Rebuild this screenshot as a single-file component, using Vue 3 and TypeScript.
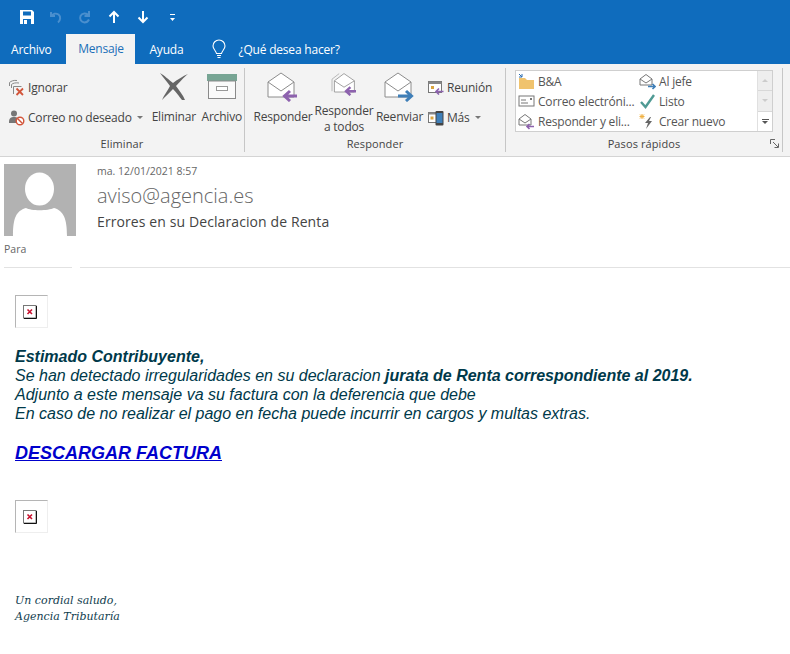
<template>
  <div class="window">
    <!-- barra de acceso rapido -->
    <div class="titlebar">
      <svg class="qa" width="16" height="16" viewBox="0 0 16 16"><path d="M1 1h12l2 2v12H1z" fill="#fff"/><rect x="4" y="2.5" width="8" height="4" fill="#0f6cbd"/><rect x="4" y="10" width="8" height="5" fill="#0f6cbd"/><rect x="5" y="11" width="3" height="4" fill="#fff"/></svg>
      <svg class="qa" width="16" height="16" viewBox="0 0 16 16" fill="none" stroke="#4a8fce" stroke-width="2"><path d="M3 3v4h4M3.5 7C5 4.500 8 4 10.500 5.500c2.500 2 2 6-.5 8"/></svg>
      <svg class="qa" width="16" height="16" viewBox="0 0 16 16" fill="none" stroke="#4a8fce" stroke-width="2"><path d="M12 2v5H7.500M11.500 6.500C9.500 3.500 5 4 3.500 7c-1.200 3 .5 6 4 6.500 2 0 3.500-1 4.500-3"/></svg>
      <svg class="qa" width="16" height="16" viewBox="0 0 16 16" fill="none" stroke="#fff" stroke-width="2"><path d="M8 14V3M3.500 7.500 8 3l4.500 4.500"/></svg>
      <svg class="qa" width="16" height="16" viewBox="0 0 16 16" fill="none" stroke="#fff" stroke-width="2"><path d="M8 2v11M3.500 8.500 8 13l4.500-4.500"/></svg>
      <svg class="qa" width="16" height="16" viewBox="0 0 16 16" fill="#fff"><rect x="6" y="5" width="5" height="1"/><path d="M6 9h5l-2.500 3z"/></svg>
    </div>

    <!-- pestañas -->
    <div class="tabs">
      <span class="tab t-archivo">Archivo</span>
      <span class="tab active">Mensaje</span>
      <span class="tab t-ayuda">Ayuda</span>
      <svg class="bulb" width="16" height="20" viewBox="0 0 16 20" fill="none" stroke="#fff" stroke-width="1.100"><path d="M5.500 14.500C5 11.500 2 10.500 2 7a6 6 0 0 1 12 0c0 3.500-3 4.500-3.500 7.500zM6 16.500h4M6.500 18.500h3"/></svg>
      <span class="tab t-search">¿Qué desea hacer?</span>
    </div>

    <!-- cinta -->
    <div class="ribbon">
      <section class="group g-eliminar">
        <div class="group-body">
          <div class="small-col">
            <div class="small-btn">
              <svg width="17" height="17" viewBox="0 0 17 17" fill="none" stroke="#8a8a8a"><path d="M1.500 7V3.500C3 2 6 1 9 1.500M3.500 9V5.500C5 4 8 3.500 11 4M5.500 15V7.500h8"/><path d="M8.500 9.500l6.500 6.500M15 9.500 8.500 16" stroke="#d2553a" stroke-width="1.800"/></svg>
              <span>Ignorar</span>
            </div>
            <div class="small-btn">
              <svg width="17" height="17" viewBox="0 0 17 17"><circle cx="6" cy="4.500" r="3" fill="#777"/><path d="M1 13c0-4 2-5 5-5s5 1 5 4l-2 2H1z" fill="#777"/><circle cx="12" cy="12" r="3.800" fill="#fff" stroke="#d2553a" stroke-width="1.400"/><path d="M9.500 9.500l5 5" stroke="#d2553a" stroke-width="1.400"/></svg>
              <span>Correo no deseado</span><i class="caret"></i>
            </div>
          </div>
          <div class="big-btn b-eliminar">
            <svg width="30" height="30" viewBox="0 0 30 30" fill="#666"><path d="M1 1c4 2 9 7 13 10C18 8 24 4 29 2c-4 3-9 9-12 12 3 4 7 9 9 14h-3c-3-4-7-9-9-11-3 3-7 7-11 11 2-5 6-10 8-14C8 10 4 5 1 1z"/></svg>
            <span>Eliminar</span>
          </div>
          <div class="big-btn b-archivo">
            <svg width="30" height="25" viewBox="0 0 30 25"><rect x="0" y="0" width="30" height="7" fill="#77a594"/><rect x="1.500" y="7" width="27" height="17.500" fill="#fafafa" stroke="#8a8a8a"/><rect x="9.500" y="12.500" width="11" height="4" fill="#fff" stroke="#999"/></svg>
            <span>Archivo</span>
          </div>
        </div>
        <div class="group-label">Eliminar</div>
      </section>

      <section class="group g-responder">
        <div class="group-body">
          <div class="big-btn b-reply">
            <svg width="32" height="30" viewBox="0 0 32 30"><path d="M1 10 14 1l13 9v15H1z" fill="#fff" stroke="#8c8c8c"/><path d="M1 10l13 9 13-9" fill="none" stroke="#8c8c8c"/><path d="M30 24H18M23 19l-5.500 5 5.500 5" fill="none" stroke="#8d62ae" stroke-width="3"/></svg>
            <span>Responder</span>
          </div>
          <div class="big-btn b-replyall">
            <svg width="32" height="30" viewBox="0 0 32 30"><path d="M1 24V9l9-7" fill="none" stroke="#aaa"/><path d="M4 11 16 2l13 9v14H4z" fill="#fff" stroke="#8c8c8c"/><path d="M4 11l12 8 13-8" fill="none" stroke="#8c8c8c"/><path d="M31 24H19M24 19l-5.500 5 5.500 5" fill="none" stroke="#8d62ae" stroke-width="3"/></svg>
            <span>Responder<br>a todos</span>
          </div>
          <div class="big-btn b-forward">
            <svg width="32" height="30" viewBox="0 0 32 30"><path d="M1 10 14 1l13 9v15H1z" fill="#fff" stroke="#8c8c8c"/><path d="M1 10l13 9 13-9" fill="none" stroke="#8c8c8c"/><path d="M14 24h13M22 19l5.500 5-5.500 5" fill="none" stroke="#3f7fb8" stroke-width="3"/></svg>
            <span>Reenviar</span>
          </div>
          <div class="small-col c-more">
            <div class="small-btn">
              <svg width="16" height="15" viewBox="0 0 16 15"><rect x=".5" y="1.500" width="13" height="11" fill="#fff" stroke="#777"/><rect x=".5" y="1.500" width="13" height="2.500" fill="#888"/><rect x="3" y="6" width="3" height="3" fill="#d9a441"/><path d="M15.500 11.500H8M11 8.500l-3 3 3 3" fill="none" stroke="#8d62ae" stroke-width="1.600"/></svg>
              <span>Reunión</span>
            </div>
            <div class="small-btn">
              <svg width="16" height="16" viewBox="0 0 16 16"><rect x=".5" y="2.500" width="10" height="10" fill="#fff" stroke="#777"/><rect x=".5" y="2.500" width="10" height="2" fill="#888"/><rect x="2.500" y="6.500" width="3" height="3" fill="#d9a441"/><rect x="7.500" y="1" width="8" height="14.500" rx="1" fill="#444"/><rect x="8.500" y="3" width="6" height="10" fill="#3f7fb8"/></svg>
              <span>Más</span><i class="caret"></i>
            </div>
          </div>
        </div>
        <div class="group-label">Responder</div>
      </section>

      <section class="group g-pasos">
        <div class="group-body">
          <div class="gallery">
            <div class="steps">
              <div class="step" v-for="s in steps" :key="s.text">
                <svg width="17" height="17" viewBox="0 0 17 17" v-html="s.icon"></svg>
                <span>{{ s.text }}</span>
              </div>
            </div>
            <div class="scroll">
              <div><i class="up"></i></div>
              <div><i class="down"></i></div>
              <div class="more"><b></b><i class="down dark"></i></div>
            </div>
          </div>
        </div>
        <div class="group-label">Pasos rápidos</div>
        <svg class="launcher" width="9" height="9" viewBox="0 0 9 9" fill="none" stroke="#666"><path d="M.5 5V.5H5M3 3l5 5M8.500 4.500v4h-4"/></svg>
      </section>
    </div>

    <!-- cabecera del mensaje -->
    <header class="msg-head">
      <div class="sender-col">
        <svg class="avatar" width="72" height="72" viewBox="0 0 72 72">
          <rect width="72" height="72" fill="#b2b2b2"/>
          <ellipse cx="35.500" cy="25" rx="14.500" ry="16.500" fill="#fff"/>
          <path d="M9 72c0-18 3-25 13-28 5 3 22 3 28 0 10 3 13 11 13 28z" fill="#fff"/>
        </svg>
        <span class="para">Para</span>
      </div>
      <div class="meta">
        <div class="date">ma. 12/01/2021 8:57</div>
        <div class="from">aviso@agencia.es</div>
        <div class="subject">Errores en su Declaracion de Renta</div>
      </div>
    </header>
    <div class="rule"><i></i><i></i></div>

    <!-- cuerpo -->
    <main class="mail">
      <div class="broken"><svg width="14" height="14" viewBox="0 0 14 14"><rect x=".5" y=".5" width="12.500" height="12.500" fill="#fff" stroke="#777"/><path d="M13.500 1v12.500H1" fill="none" stroke="#111"/><path d="M4.500 4.500l4.500 4.500M9 4.500 4.500 9" stroke="#c8102e" stroke-width="1.600"/></svg></div>
      <div class="text">
        <p><b>Estimado Contribuyente,</b></p>
        <p>Se han detectado irregularidades en su declaracion <b>jurata de Renta correspondiente al 2019.</b></p>
        <p>Adjunto a este mensaje va su factura con la deferencia que debe</p>
        <p>En caso de no realizar el pago en fecha puede incurrir en cargos y multas extras.</p>
      </div>
      <a class="link" href="#">DESCARGAR FACTURA</a>
      <div class="broken second"><svg width="14" height="14" viewBox="0 0 14 14"><rect x=".5" y=".5" width="12.500" height="12.500" fill="#fff" stroke="#777"/><path d="M13.500 1v12.500H1" fill="none" stroke="#111"/><path d="M4.500 4.500l4.500 4.500M9 4.500 4.500 9" stroke="#c8102e" stroke-width="1.600"/></svg></div>
      <div class="sign">Un cordial saludo,<br>Agencia Tributaría</div>
    </main>
  </div>
</template>

<script setup lang="ts">
interface Step {
  text: string
  icon: string
}

const envelope = '<path d="M1 6 7 1.500 13 6v6H1z" fill="#fff" stroke="#777"/><path d="M1 6l6 4 6-4" fill="none" stroke="#777"/>'

// la rejilla se rellena por columnas, igual que en Outlook
const steps: Step[] = [
  { text: 'B&A', icon: '<path d="M1 5h6l2 2h7v9H1z" fill="#f0c36d"/><path d="M1 1l3 3M4 1v3H1" fill="none" stroke="#2b6cb0"/>' },
  { text: 'Correo electróni...', icon: '<rect x="1" y="3" width="15" height="10" fill="#fff" stroke="#777"/><path d="M3 7h5M3 10h7" stroke="#777"/><rect x="12" y="5" width="2" height="2" fill="#777"/>' },
  { text: 'Responder y eli...', icon: envelope + '<path d="M16 13.500H9M11.500 11l-2.500 2.500 2.500 2.500" fill="none" stroke="#8d62ae" stroke-width="1.600"/>' },
  { text: 'Al jefe', icon: envelope + '<path d="M9 13.500h7M13.500 11l2.500 2.500-2.500 2.500" fill="none" stroke="#3f7fb8" stroke-width="1.600"/>' },
  { text: 'Listo', icon: '<path d="M2 9l4.500 5L15 2" fill="none" stroke="#4f9a94" stroke-width="2.400"/>' },
  { text: 'Crear nuevo', icon: '<path d="M11 4 6 10h3l-2 6 6-8h-3l2-4z" fill="#666"/><path d="M3 1v5M.5 3.500h5M1 1.500l4 4M5 1.500l-4 4" stroke="#f0b040"/>' }
]
</script>

<style>
html, body {
  margin: 0;
  background: #fff;
}
</style>

<style scoped>
.window {
  width: 790px;
  height: 654px;
  overflow: hidden;
  font-family: "Open Sans", "Noto Sans", sans-serif;
  font-size: 12px;
  color: #444;
}

.titlebar {
  height: 34px;
  background: #0f6cbd;
  display: flex;
  align-items: center;
  gap: 13px;
  padding-left: 19px;
}

.tabs {
  height: 30px;
  background: #0f6cbd;
  display: flex;
  align-items: center;
  position: relative;
  color: #fff;
}
.tab {
  letter-spacing: -0.2px;
}
.t-archivo { margin-left: 11px; }
.tab.active {
  margin-left: 15px;
  width: 69px;
  height: 30px;
  line-height: 30px;
  text-align: center;
  background: #f3f3f3;
  color: #1a6fb8;
}
.t-ayuda { margin-left: 14px; }
.bulb { margin-left: 28px; }
.t-search { margin-left: 11px; }

.ribbon {
  height: 92px;
  background: #f3f3f3;
  border-bottom: 1px solid #d4d4d4;
  box-sizing: content-box;
  display: flex;
}
.group {
  position: relative;
  display: flex;
  flex-direction: column;
  margin: 4px 0;
  border-right: 1px solid #c6c6c6;
}
.g-eliminar { width: 244px; }
.g-responder { width: 260px; }
.g-pasos { width: 276px; }
.group-body {
  flex: 1;
  display: flex;
  min-height: 0;
}
.group-label {
  height: 17px;
  line-height: 17px;
  text-align: center;
  font-size: 11px;
  letter-spacing: 0.1px;
}

.small-col {
  display: flex;
  flex-direction: column;
  gap: 13px;
  padding: 11px 0 0 8px;
}
.small-btn {
  display: flex;
  align-items: center;
  gap: 3px;
  height: 17px;
  white-space: nowrap;
  letter-spacing: -0.2px;
}
.c-more {
  padding-left: 6px;
}
.caret {
  display: inline-block;
  margin-left: 2px;
  border: 3px solid transparent;
  border-top-color: #777;
  border-bottom: 0;
}

.big-btn {
  display: flex;
  flex-direction: column;
  align-items: center;
  text-align: center;
  line-height: 16px;
  white-space: nowrap;
  letter-spacing: -0.2px;
}
.big-btn svg {
  height: 30px;
  margin-top: 4px;
  margin-bottom: 7px;
}
.b-eliminar { margin-left: 9px; width: 44px; }
.b-archivo { margin-left: 5px; width: 42px; }
.b-archivo svg { margin-top: 6px; height: 25px; margin-bottom: 10px; }
.b-reply { margin-left: 10px; width: 56px; }
.b-replyall { margin-left: 5px; width: 56px; }
.b-forward { margin-left: 5px; width: 45px; }

.gallery {
  margin: 2px 0 0 9px;
  width: 256px;
  height: 60px;
  display: flex;
  background: #fff;
  border: 1px solid #cfcfcf;
}
.steps {
  flex: 1;
  display: grid;
  grid-template-columns: 121px 1fr;
  grid-template-rows: repeat(3, 20px);
  grid-auto-flow: column;
  padding-left: 2px;
}
.step {
  display: flex;
  align-items: center;
  gap: 3px;
  white-space: nowrap;
  letter-spacing: -0.2px;
  color: #555;
}
.scroll {
  width: 14px;
  display: flex;
  flex-direction: column;
  border-left: 1px solid #e0e0e0;
}
.scroll div {
  flex: 1;
  background: #eee;
  border-bottom: 1px solid #d8d8d8;
  display: flex;
  flex-direction: column;
  align-items: center;
  justify-content: center;
  gap: 1px;
}
.scroll div.more { background: #fff; border-bottom: 0; }
.scroll b {
  width: 7px;
  height: 1px;
  background: #555;
}
.up, .down {
  border: 3px solid transparent;
}
.up { border-bottom-color: #ccc; border-top: 0; }
.down { border-top-color: #ccc; border-bottom: 0; }
.down.dark { border-top-color: #555; }

.launcher {
  position: absolute;
  right: 3px;
  bottom: 4px;
}

.msg-head {
  height: 110px;
  display: flex;
  padding: 7px 0 0 4px;
  box-sizing: border-box;
}
.sender-col {
  width: 72px;
  display: flex;
  flex-direction: column;
}
.avatar { display: block; }
.para {
  margin-top: 6px;
  font-size: 10.500px;
  color: #666;
}
.meta {
  margin-left: 21px;
}
.date {
  font-size: 10.500px;
  line-height: 14px;
  color: #666;
}
.from {
  margin-top: 4px;
  font-size: 20px;
  font-weight: 300;
  line-height: 27px;
  color: #666;
}
.subject {
  margin-top: 3px;
  font-size: 14px;
  line-height: 20px;
  color: #444;
  letter-spacing: 0.1px;
}
.rule {
  display: flex;
  gap: 8px;
  padding-left: 4px;
}
.rule i {
  height: 1px;
  background: #e2e2e2;
}
.rule i:first-child { width: 68px; }
.rule i:last-child { flex: 1; }

.mail {
  padding: 27px 0 0 15px;
}
.broken {
  width: 31px;
  height: 31px;
  box-sizing: content-box;
  border-top: 1px solid #b5b5b5;
  border-left: 1px solid #b5b5b5;
  border-right: 1px solid #eee;
  border-bottom: 1px solid #eee;
  margin-left: 0;
  padding: 0;
  display: flex;
  justify-content: center;
  align-items: center;
}
.broken svg { margin-right: 3px; }
.text {
  margin-top: 19px;
  font-family: "Liberation Sans", Arial, sans-serif;
  font-style: italic;
  font-size: 16px;
  line-height: 19px;
  color: #00394a;
}
.text p { margin: 0; }
.link {
  display: block;
  margin-top: 20px;
  font-family: "Liberation Sans", Arial, sans-serif;
  font-style: italic;
  font-weight: bold;
  font-size: 18px;
  line-height: 21px;
  color: #0000cc;
}
.second { margin-top: 36px; }
.sign {
  margin-top: 60px;
  font-family: "DejaVu Serif", serif;
  font-style: italic;
  font-size: 11px;
  line-height: 16px;
  color: #12404f;
}
</style>
